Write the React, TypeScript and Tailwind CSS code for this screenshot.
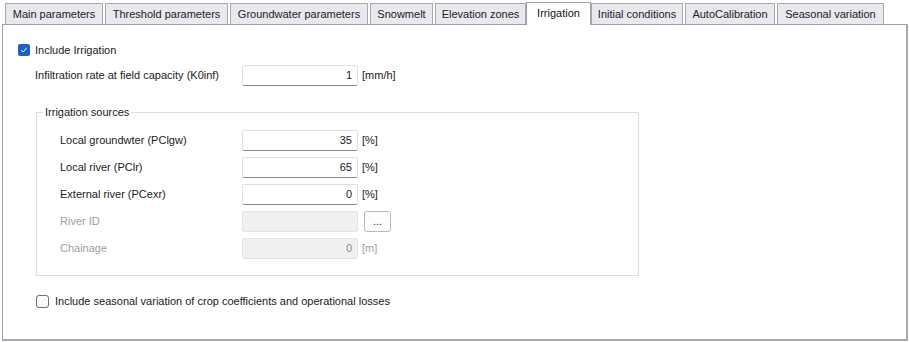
import React from "react";

const tabs = [
  { label: "Main parameters", w: 98, ml: 0 },
  { label: "Threshold parameters", w: 123, ml: 2 },
  { label: "Groundwater parameters", w: 138, ml: 2 },
  { label: "Snowmelt", w: 63, ml: 2 },
  { label: "Elevation zones", w: 91, ml: 2 },
  { label: "Irrigation", w: 65, ml: 0, active: true },
  { label: "Initial conditions", w: 92, ml: 0 },
  { label: "AutoCalibration", w: 90, ml: 2 },
  { label: "Seasonal variation", w: 107, ml: 2 },
];

function Input({ value, disabled }: { value: string; disabled?: boolean }) {
  return (
    <div
      className={
        disabled
          ? "w-[116px] h-[21px] bg-[#f0f0f0] border border-[#e3e3e3] rounded-[2px] flex items-center justify-end pr-[5px] text-[#8a8a8a]"
          : "w-[116px] h-[21px] bg-white border border-[#e0e0e0] border-b-[#8a8a8a] rounded-[2px] flex items-center justify-end pr-[5px] text-[#1a1a1a]"
      }
    >
      {value}
    </div>
  );
}

function Row({
  label,
  value,
  unit,
  disabled,
  button,
}: {
  label: string;
  value: string;
  unit?: string;
  disabled?: boolean;
  button?: boolean;
}) {
  return (
    <div className="flex items-center h-[21px]">
      <div className={"w-[182px] " + (disabled ? "text-[#a0a0a0]" : "text-[#1a1a1a]")}>{label}</div>
      <Input value={value} disabled={disabled} />
      {unit && <div className={"ml-[4px] " + (disabled ? "text-[#a0a0a0]" : "text-[#1a1a1a]")}>{unit}</div>}
      {button && (
        <div className="ml-[6px] w-[27px] h-[21px] border border-[#b8b8b8] rounded-[3px] bg-[#fdfdfd] flex items-center justify-center text-[#333] leading-none">
          ...
        </div>
      )}
    </div>
  );
}

export default function App() {
  return (
    <div
      className="w-[909px] h-[342px] bg-white text-[11px] text-[#1a1a1a] overflow-hidden"
      style={{ fontFamily: "'Liberation Sans', Arial, sans-serif" }}
    >
      <div className="pl-[2px] pt-[1px]">
        <div className="flex items-end h-[23px] pl-[3px] relative z-10">
          {tabs.map((t) =>
            t.active ? (
              <div
                key={t.label}
                className="h-[23px] bg-white border border-[#a0a0a8] border-b-0 flex items-center justify-center pb-[2px] -mb-[1px] text-[#111] whitespace-nowrap"
                style={{ width: t.w, marginLeft: t.ml }}
              >
                {t.label}
              </div>
            ) : (
              <div
                key={t.label}
                className="h-[21px] bg-[#e8e8ee] border border-[#a8a8b0] border-b-0 flex items-center justify-center text-[#222] whitespace-nowrap"
                style={{ width: t.w, marginLeft: t.ml }}
              >
                {t.label}
              </div>
            )
          )}
        </div>
        <div className="w-[906px] h-[317px] border border-[#a0a0a8] border-r-2 border-b-2 border-r-[#a8a8b4] border-b-[#a8a8b4] bg-white pl-[15px] pt-[17px]">
          <div className="flex items-center h-[16px]">
            <div className="w-[12px] h-[12px] rounded-[2px] bg-[#1e64be] flex items-center justify-center">
              <svg width="8" height="8" viewBox="0 0 8 8">
                <path d="M1.2 4.2 L3.1 6 L6.8 1.8" fill="none" stroke="white" strokeWidth="1" />
              </svg>
            </div>
            <div className="ml-[5px]">Include Irrigation</div>
          </div>
          <div className="flex items-center h-[21px] mt-[7px] ml-[17px]">
            <div className="w-[207px]">Infiltration rate at field capacity (K0inf)</div>
            <Input value="1" />
            <div className="ml-[4px]">[mm/h]</div>
          </div>
          <div className="relative mt-[26px] ml-[18px] w-[603px] h-[164px] border border-[#dcdcdc] pl-[23px] pt-[17px]">
            <div className="absolute left-[6px] -top-[9px] bg-white px-[2px] leading-[16px]">Irrigation sources</div>
            <div className="flex flex-col gap-[6px]">
              <Row label="Local groundwter (PClgw)" value="35" unit="[%]" />
              <Row label="Local river (PClr)" value="65" unit="[%]" />
              <Row label="External river (PCexr)" value="0" unit="[%]" />
              <Row label="River ID" value="" disabled button />
              <Row label="Chainage" value="0" unit="[m]" disabled />
            </div>
          </div>
          <div className="flex items-center h-[16px] mt-[17px] ml-[18px]">
            <div className="w-[13px] h-[13px] rounded-[3px] border border-[#707070] bg-[#fafafa]" />
            <div className="ml-[6px]">Include seasonal variation of crop coefficients and operational losses</div>
          </div>
        </div>
      </div>
    </div>
  );
}
